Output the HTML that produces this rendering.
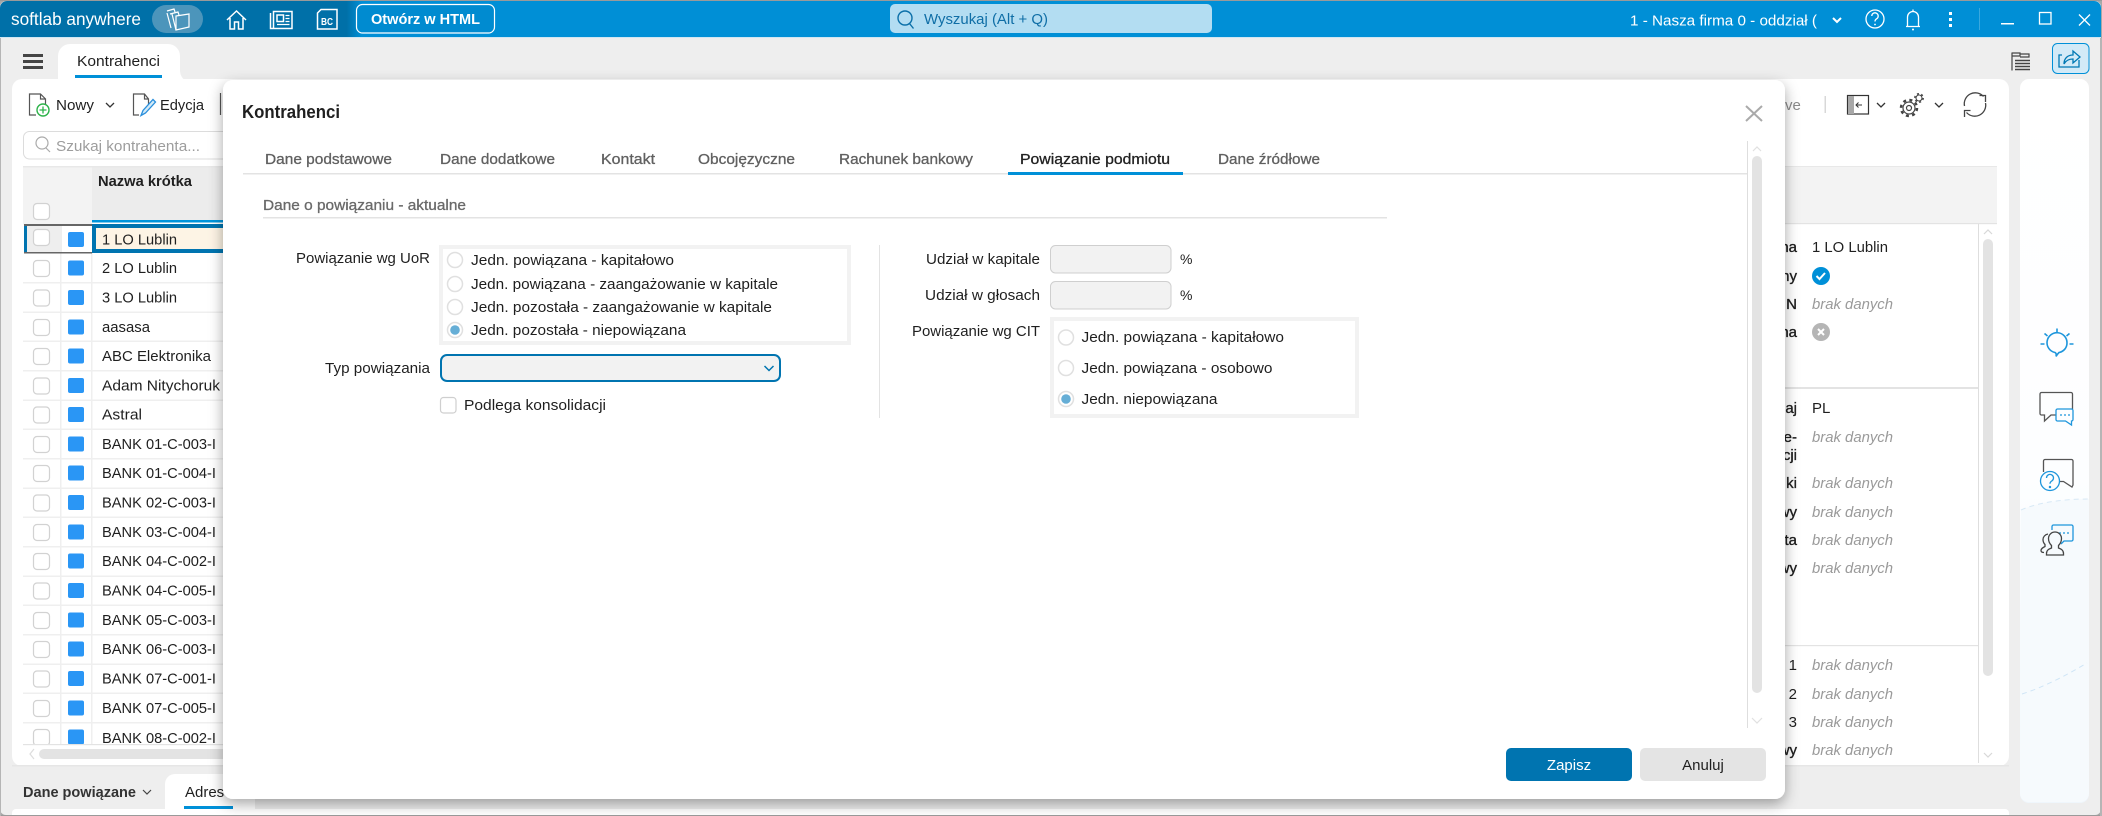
<!DOCTYPE html>
<html lang="pl"><head><meta charset="utf-8"><title>Kontrahenci</title>
<style>
html,body{margin:0;padding:0;width:2102px;height:816px;overflow:hidden;background:#a8a8a8}
svg{display:block}
text{font-family:"Liberation Sans",Arial,sans-serif;font-size:15px;fill:#1f1f1f}
.b{font-weight:bold}
.m{stroke:#1f1f1f;stroke-width:.35px}
.tab{fill:#606060;stroke:#606060;stroke-width:.3px;font-size:14.5px}
.g{font-style:italic;fill:#9a9a9a}
.w{fill:#fff}
</style></head><body>
<svg xmlns="http://www.w3.org/2000/svg" width="2102" height="816" viewBox="0 0 2102 816">
<defs>
<linearGradient id="tg" x1="0" x2="1" y1="0" y2="0"><stop offset="0" stop-color="#0070a8"/><stop offset=".165" stop-color="#0070a8"/><stop offset=".172" stop-color="#008fd6"/><stop offset="1" stop-color="#008fd6"/></linearGradient>
<linearGradient id="sb" x1="0" x2="0" y1="0" y2="1"><stop offset="0" stop-color="#fff"/><stop offset=".55" stop-color="#fdfeff"/><stop offset="1" stop-color="#eff6fc"/></linearGradient>
<filter id="sh" x="-5%" y="-5%" width="110%" height="115%"><feDropShadow dx="0" dy="5" stdDeviation="7" flood-color="#000" flood-opacity=".35"/></filter>
<clipPath id="tc"><rect x="23" y="166" width="205" height="578"/></clipPath>
<g id="cb"><rect x="0.5" y="0.5" width="16" height="16" rx="3.5" fill="#fff" stroke="#d2d2d2" stroke-width="1.2"/></g>
<g id="sq"><rect x="0" y="0" width="16" height="15" rx="2" fill="#2a96f5"/></g>
</defs>

<!-- window -->
<rect x="0" y="1" width="2101" height="814" rx="6" fill="#eeeeee"/>
<path d="M0 37V8a7 7 0 0 1 7-7H2094a7 7 0 0 1 7 7V37Z" fill="url(#tg)"/>
<rect x="0" y="37" width="2101" height="1" fill="#cfe6f3"/>

<!-- top bar left -->
<text class="w" x="11" y="25" style="font-size:17.5px" textLength="130" lengthAdjust="spacingAndGlyphs">softlab anywhere</text>
<rect x="152" y="5" width="51" height="28" rx="14" fill="#4c95bb"/>
<g fill="none" stroke="#fff" stroke-width="1.2">
<path d="M167 11l7-2 1 3M170 14l8-2 1 3"/><path d="M176 30l-4-16M171 28l-4-15"/>
<path d="M176 16l13-2v13l-13 3Z"/>
</g>
<g fill="none" stroke="#fff" stroke-width="1.5">
<path d="M227 20l9.5-9 9.5 9M230 18v11h4.5v-7h4v7h4.5V18"/>
<path d="M270.5 13v15.5h21.5V11.5H273.5v17"/>
<rect x="277" y="15" width="6.5" height="6.5"/>
<path d="M285.5 15.5h4M285.5 18.5h4M285.5 21.5h4M277 24.5h12.5" stroke-width="1.2"/>
<path d="M321 9.5h16v19.5h-19.5V13Z"/>
</g>
<text class="w b" x="321" y="25" style="font-size:10.5px" textLength="12" lengthAdjust="spacingAndGlyphs">BC</text>
<rect x="356.5" y="4.5" width="138" height="28.5" rx="6" fill="#008bd0" stroke="#fff" stroke-width="1.2"/>
<text class="w b" x="371" y="24" style="font-size:14.5px" textLength="109" lengthAdjust="spacingAndGlyphs">Otwórz w HTML</text>

<!-- search -->
<rect x="890" y="4" width="322" height="29" rx="5" fill="#b3ddf2"/>
<circle cx="905" cy="18" r="7" fill="none" stroke="#0a6fa8" stroke-width="1.4"/><path d="M909.5 23.5l4 5" stroke="#0a6fa8" stroke-width="1.4"/>
<text x="924" y="24" style="font-size:15px;fill:#0f6ea6" textLength="124" lengthAdjust="spacingAndGlyphs">Wyszukaj (Alt + Q)</text>

<!-- top right -->
<text class="w" x="1630" y="25.5" textLength="187" lengthAdjust="spacingAndGlyphs">1 - Nasza firma 0 - oddział (</text>
<path d="M1833 18l4 4 4-4" fill="none" stroke="#fff" stroke-width="2"/>
<g fill="none" stroke="#fff" stroke-width="1.3">
<circle cx="1875" cy="19" r="9"/>
<path d="M1871.8 16a3.2 3.2 0 1 1 4.8 2.8c-1.2.7-1.6 1.3-1.6 2.7"/>
<path d="M1906 26.500h14M1907.500 26v-9a5.500 5.500 0 0 1 11 0v9M1913 9.500v2"/>
</g>
<circle cx="1875" cy="24.500" r=".9" fill="#fff"/><circle cx="1913" cy="29.500" r="1" fill="#fff"/>
<g fill="#fff"><rect x="1949" y="12" width="3" height="3"/><rect x="1949" y="18" width="3" height="3"/><rect x="1949" y="24" width="3" height="3"/></g>
<rect x="1979" y="8" width="1" height="22" fill="#3aa8de"/>
<rect x="2001" y="23" width="13" height="1.500" fill="#fff"/>
<rect x="2039.500" y="12.500" width="11.500" height="11.500" fill="none" stroke="#fff" stroke-width="1.300"/>
<path d="M2079 14.500l11 11M2090 14.500l-11 11" stroke="#fff" stroke-width="1.300"/>

<!-- second bar -->
<g fill="#444"><rect x="23" y="54" width="20" height="3"/><rect x="23" y="60" width="20" height="3"/><rect x="23" y="66" width="20" height="3"/></g>
<path d="M58 80c0-1 0-3 0-24a12 12 0 0 1 12-12h98a12 12 0 0 1 12 12v14c0 6 3 9 5 10Z" fill="#fff"/>
<text x="77" y="66" textLength="83" lengthAdjust="spacingAndGlyphs">Kontrahenci</text>
<rect x="75" y="75" width="87" height="3" fill="#0090d8"/>
<g fill="none" stroke="#444" stroke-width="1.200">
<path d="M2012 52.500v18M2012 53h8v3h-8M2020 54h9v3h-9"/>
<path d="M2015 60.500h15M2015 63.500h15M2015 66.500h15M2015 69.500h15" stroke-width="1.500"/>
</g>
<rect x="2052.500" y="43.500" width="36.500" height="30" rx="5" fill="#d3eaf7" stroke="#0090d8" stroke-width="1"/>
<g fill="none" stroke="#0078b4" stroke-width="1.300">
<path d="M2062 55h-3v12h20v-7"/><path d="M2064 64c0-6 4-9 9-9v-4l7 6-7 6v-4c-4 0-7 1-9 5Z"/>
</g>

<!-- main white panel -->
<rect x="12" y="79" width="1997" height="687" rx="10" fill="#fff"/>
<rect x="12" y="765" width="1997" height="1.500" fill="#e6e6e6"/>
<!-- toolbar -->
<g fill="none" stroke="#555" stroke-width="1.200">
<path d="M36 115h-6.500V94h11l5 5v5M40.500 94v5h5"/>
<path d="M139 115h-5.500V94h11l4 5v6M144.500 94v5h4"/>
<path d="M220.500 93v22"/>
</g>
<circle cx="43" cy="110" r="6" fill="#fff" stroke="#2db34a" stroke-width="1.400"/><path d="M43 106.500v7M39.500 110h7" stroke="#2db34a" stroke-width="1.300"/>
<path d="M141 115.500l2-5 10-11 2.500 2.500-10 11Z" fill="#d3eaf7" stroke="#2a8fdc" stroke-width="1.300"/>
<text x="56" y="110" textLength="38" lengthAdjust="spacingAndGlyphs">Nowy</text>
<path d="M106 103l4 4 4-4" fill="none" stroke="#333" stroke-width="1.300"/>
<text x="160" y="110" textLength="44" lengthAdjust="spacingAndGlyphs">Edycja</text>
<!-- search -->
<rect x="23.500" y="131.500" width="210" height="27.500" rx="6" fill="#fff" stroke="#dcdcdc"/>
<circle cx="42" cy="143" r="6" fill="none" stroke="#aaa" stroke-width="1.200"/><path d="M46 148l4 4" stroke="#aaa" stroke-width="1.200"/>
<text x="56" y="151" style="font-size:15px;fill:#9d9d9d" textLength="144" lengthAdjust="spacingAndGlyphs">Szukaj kontrahenta...</text>
<!-- table header -->
<rect x="23" y="166" width="205" height="1.500" fill="#e8e8e8"/>
<rect x="23" y="167.500" width="69" height="57" fill="#f3f3f3"/>
<rect x="92" y="167.500" width="136" height="53" fill="#ececec"/>
<rect x="92" y="220" width="136" height="2.500" fill="#0095db"/>
<text class="b" x="98" y="186" style="font-size:14.500px" textLength="94" lengthAdjust="spacingAndGlyphs">Nazwa krótka</text>
<use href="#cb" x="33" y="203"/>

<!-- table rows -->
<g clip-path="url(#tc)">
<g fill="#efefef">
<rect x="60" y="253" width="1.500" height="491"/><rect x="91" y="253" width="1.500" height="491"/>
<rect x="23" y="282" width="205" height="1.500"/><rect x="23" y="311.500" width="205" height="1.500"/><rect x="23" y="340.500" width="205" height="1.500"/><rect x="23" y="370" width="205" height="1.500"/><rect x="23" y="399.500" width="205" height="1.500"/><rect x="23" y="428.500" width="205" height="1.500"/><rect x="23" y="458" width="205" height="1.500"/><rect x="23" y="487.500" width="205" height="1.500"/><rect x="23" y="516.500" width="205" height="1.500"/><rect x="23" y="546" width="205" height="1.500"/><rect x="23" y="575.500" width="205" height="1.500"/><rect x="23" y="604.500" width="205" height="1.500"/><rect x="23" y="634" width="205" height="1.500"/><rect x="23" y="663.500" width="205" height="1.500"/><rect x="23" y="692.500" width="205" height="1.500"/><rect x="23" y="722" width="205" height="1.500"/>
</g>
<!-- selected -->
<rect x="27" y="226" width="35" height="26" fill="#eeeeee"/>
<rect x="24" y="224" width="68" height="2" fill="#666"/><rect x="24" y="252" width="68" height="1.500" fill="#666"/>
<rect x="24" y="226" width="3" height="26" fill="#0074b0"/>
<rect x="92" y="224" width="136" height="29" fill="#0074b0"/>
<rect x="96" y="228" width="132" height="21" fill="#fdf4e5"/>
<use href="#cb" x="33" y="229"/><use href="#sq" x="68" y="232"/>
<text x="102" y="244.500" textLength="75" lengthAdjust="spacingAndGlyphs">1 LO Lublin</text>
<use href="#cb" x="33" y="260"/><use href="#sq" x="68" y="260.500"/><text x="102" y="273" textLength="75" lengthAdjust="spacingAndGlyphs">2 LO Lublin</text>
<use href="#cb" x="33" y="289.500"/><use href="#sq" x="68" y="290"/><text x="102" y="302.500" textLength="75" lengthAdjust="spacingAndGlyphs">3 LO Lublin</text>
<use href="#cb" x="33" y="319"/><use href="#sq" x="68" y="319.500"/><text x="102" y="332" textLength="48" lengthAdjust="spacingAndGlyphs">aasasa</text>
<use href="#cb" x="33" y="348"/><use href="#sq" x="68" y="348.500"/><text x="102" y="361" textLength="109" lengthAdjust="spacingAndGlyphs">ABC Elektronika</text>
<use href="#cb" x="33" y="377.500"/><use href="#sq" x="68" y="378"/><text x="102" y="390.500" textLength="118" lengthAdjust="spacingAndGlyphs">Adam Nitychoruk</text>
<use href="#cb" x="33" y="406.500"/><use href="#sq" x="68" y="407"/><text x="102" y="419.500" textLength="40" lengthAdjust="spacingAndGlyphs">Astral</text>
<use href="#cb" x="33" y="436"/><use href="#sq" x="68" y="436.500"/><text x="102" y="449" textLength="114" lengthAdjust="spacingAndGlyphs">BANK 01-C-003-I</text>
<use href="#cb" x="33" y="465"/><use href="#sq" x="68" y="465.500"/><text x="102" y="478" textLength="114" lengthAdjust="spacingAndGlyphs">BANK 01-C-004-I</text>
<use href="#cb" x="33" y="494.500"/><use href="#sq" x="68" y="495"/><text x="102" y="507.500" textLength="114" lengthAdjust="spacingAndGlyphs">BANK 02-C-003-I</text>
<use href="#cb" x="33" y="524"/><use href="#sq" x="68" y="524.500"/><text x="102" y="537" textLength="114" lengthAdjust="spacingAndGlyphs">BANK 03-C-004-I</text>
<use href="#cb" x="33" y="553"/><use href="#sq" x="68" y="553.500"/><text x="102" y="566" textLength="114" lengthAdjust="spacingAndGlyphs">BANK 04-C-002-I</text>
<use href="#cb" x="33" y="582.500"/><use href="#sq" x="68" y="583"/><text x="102" y="595.500" textLength="114" lengthAdjust="spacingAndGlyphs">BANK 04-C-005-I</text>
<use href="#cb" x="33" y="612"/><use href="#sq" x="68" y="612.500"/><text x="102" y="625" textLength="114" lengthAdjust="spacingAndGlyphs">BANK 05-C-003-I</text>
<use href="#cb" x="33" y="641"/><use href="#sq" x="68" y="641.500"/><text x="102" y="654" textLength="114" lengthAdjust="spacingAndGlyphs">BANK 06-C-003-I</text>
<use href="#cb" x="33" y="670.500"/><use href="#sq" x="68" y="671"/><text x="102" y="683.500" textLength="114" lengthAdjust="spacingAndGlyphs">BANK 07-C-001-I</text>
<use href="#cb" x="33" y="700"/><use href="#sq" x="68" y="700.500"/><text x="102" y="713" textLength="114" lengthAdjust="spacingAndGlyphs">BANK 07-C-005-I</text>
<use href="#cb" x="33" y="729"/><use href="#sq" x="68" y="729.500"/><text x="102" y="743" textLength="114" lengthAdjust="spacingAndGlyphs">BANK 08-C-002-I</text>
</g>
<rect x="23" y="744" width="205" height="1.200" fill="#e3e3e3"/>
<path d="M34 749l-4 5 4 5" fill="none" stroke="#ddd" stroke-width="1.200"/>
<rect x="39" y="749" width="190" height="10" rx="5" fill="#e3e3e3"/>

<!-- right behind part -->
<text x="1785" y="110" style="font-size:15px;fill:#8a8a8a">ve</text>
<rect x="1824.500" y="96" width="1.500" height="17" fill="#d8d8d8"/>
<rect x="1847.500" y="95.500" width="21" height="18.500" fill="#fff" stroke="#333" stroke-width="1.200"/>
<rect x="1848" y="96" width="6" height="18" fill="#a8a8a8"/>
<path d="M1862 105h-6M1858.500 102.500l-2.500 2.500 2.500 2.500" fill="none" stroke="#333" stroke-width="1"/>
<path d="M1877 103l4 4 4-4M1935 103l4 4 4-4" fill="none" stroke="#333" stroke-width="1.300"/>
<g fill="none" stroke="#444">
<circle cx="1909" cy="108" r="6" stroke-width="1.200"/><circle cx="1909" cy="108" r="8" stroke-width="2.500" stroke-dasharray="3 3.300"/><circle cx="1909" cy="108" r="2.500" stroke-width="1.200"/>
<circle cx="1919" cy="98" r="3" stroke-width="1.100"/><circle cx="1919" cy="98" r="4.200" stroke-width="1.500" stroke-dasharray="2 2.400"/>
<path d="M1964.500 106a11 11 0 0 1 19-9.500M1985.500 102v-6.500h-6M1985.500 103a11 11 0 0 1-19 9.500M1964.500 117v-6.500h6" stroke-width="1.300"/>
</g>
<rect x="1785" y="166" width="212" height="1.200" fill="#e8e8e8"/>
<rect x="1785" y="167" width="212" height="56" fill="#f3f3f3"/>
<rect x="1785" y="223" width="212" height="1.200" fill="#e3e3e3"/>
<rect x="1978" y="224" width="1" height="539" fill="#dedede"/>
<path d="M1984 234l4-4 4 4M1984 753l4 4 4-4" fill="none" stroke="#d8d8d8" stroke-width="1.200"/>
<rect x="1983" y="239" width="10" height="437" rx="5" fill="#e3e3e3"/>
<g text-anchor="end">
<text class="m" x="1797" y="252">na</text>
<text class="m" x="1797" y="281">ny</text>
<text class="m" x="1797" y="309">N</text>
<text class="m" x="1797" y="337">na</text>
<text class="m" x="1797" y="413">aj</text>
<text class="m" x="1797" y="442">e-</text>
<text class="m" x="1797" y="460">cji</text>
<text class="m" x="1797" y="488">ki</text>
<text class="m" x="1797" y="517">wy</text>
<text class="m" x="1797" y="545">ta</text>
<text class="m" x="1797" y="573">wy</text>
<text x="1797" y="670">1</text>
<text x="1797" y="699">2</text>
<text x="1797" y="727">3</text>
<text class="m" x="1797" y="755">wy</text>
</g>
<text x="1812" y="252" textLength="76" lengthAdjust="spacingAndGlyphs">1 LO Lublin</text>
<circle cx="1821" cy="276" r="9" fill="#0090d8"/><path d="M1816.500 276l3 3 5.500-6" fill="none" stroke="#fff" stroke-width="2"/>
<circle cx="1821" cy="332" r="9" fill="#b5b5b5"/><path d="M1818 329l6 6M1824 329l-6 6" fill="none" stroke="#fff" stroke-width="2"/>
<text x="1812" y="413">PL</text>
<text class="g" x="1812" y="309" textLength="81" lengthAdjust="spacingAndGlyphs">brak danych</text>
<text class="g" x="1812" y="442" textLength="81" lengthAdjust="spacingAndGlyphs">brak danych</text>
<text class="g" x="1812" y="488" textLength="81" lengthAdjust="spacingAndGlyphs">brak danych</text>
<text class="g" x="1812" y="517" textLength="81" lengthAdjust="spacingAndGlyphs">brak danych</text>
<text class="g" x="1812" y="545" textLength="81" lengthAdjust="spacingAndGlyphs">brak danych</text>
<text class="g" x="1812" y="573" textLength="81" lengthAdjust="spacingAndGlyphs">brak danych</text>
<text class="g" x="1812" y="670" textLength="81" lengthAdjust="spacingAndGlyphs">brak danych</text>
<text class="g" x="1812" y="699" textLength="81" lengthAdjust="spacingAndGlyphs">brak danych</text>
<text class="g" x="1812" y="727" textLength="81" lengthAdjust="spacingAndGlyphs">brak danych</text>
<text class="g" x="1812" y="755" textLength="81" lengthAdjust="spacingAndGlyphs">brak danych</text>
<rect x="1785" y="387" width="193" height="2" fill="#e3e3e3"/>
<rect x="1785" y="645" width="193" height="1.200" fill="#e3e3e3"/>

<!-- right side panel -->
<rect x="2020" y="79" width="69" height="724" rx="9" fill="url(#sb)"/>
<path d="M2021 510c18-8 44-11 68-11v294a9 9 0 0 1-9 9h-51a9 9 0 0 1-9-9Z" fill="#f6fafd"/>
<path d="M2021 510c18-8 44-11 68-11" fill="none" stroke="#d8e9f6" stroke-dasharray="5 4"/>
<path d="M2022 694c22-7 45-19 65-31" fill="none" stroke="#cfe5f6" stroke-dasharray="5 4"/>
<g fill="none" stroke="#1e96dc" stroke-width="1.600">
<path d="M2056 356.500c1-2 2-3 3-4 5-1 8-5 8-9.500a10 10 0 1 0-12 9.500c1 .5 1.500 2 1 4"/>
<path d="M2057 328.500v4M2044.500 333.500l3 2.500M2069.500 333.500l-3 2.500M2040.500 344h4M2069.500 344h4"/>
</g>
<g fill="none" stroke="#555" stroke-width="1.300">
<path d="M2056 415h-5l-6.500 6v-6h-3a1.500 1.500 0 0 1-1.500-1.500V394a1.500 1.500 0 0 1 1.500-1.500h29.500a1.500 1.500 0 0 1 1.500 1.500v15"/>
<path d="M2043.500 472v-11a1.500 1.500 0 0 1 1.500-1.500h26.500a1.500 1.500 0 0 1 1.500 1.500v24l-1 2-8.500-5.500h-3.500"/>
</g>
<g fill="none" stroke="#1e96dc" stroke-width="1.300">
<path d="M2058 409h13.500a1.500 1.500 0 0 1 1.500 1.500v9a1.500 1.500 0 0 1-1.500 1.500v4l-6-4h-8a1.500 1.500 0 0 1-1.500-1.500v-9a1.500 1.500 0 0 1 1.500-1.500Z"/>
<path d="M2060 415h10" stroke-dasharray="2 2"/>
<circle cx="2050" cy="481" r="9.500"/><path d="M2046.500 478a3.500 3.500 0 1 1 5.500 2.800c-1.300.8-2 1.500-2 3"/><circle cx="2050" cy="487" r=".6"/>
<path d="M2052 530v-3.500a1.500 1.500 0 0 1 1.500-1.500h18a1.500 1.500 0 0 1 1.500 1.500v13a1.500 1.500 0 0 1-1.500 1.500h-7.500l-3 3"/>
<path d="M2059 533h10" stroke-dasharray="2 2"/>
</g>
<g fill="none" stroke="#444" stroke-width="1.300">
<path d="M2055 532a6.500 6.500 0 0 1 6.500 6.500c0 3-1.500 5.500-3 7v2.500c2.500 1 5 2 5 5.500v1.500h-17v-1.500c0-3.500 2.500-4.500 5-5.500v-2.500c-1.500-1.500-3-4-3-7a6.500 6.500 0 0 1 6.500-6.500Z"/>
<path d="M2048 534c-3 .5-5 3-5 5.500 0 2 1 4 2 5v2c-2 1-4 2-4 4 0 1.500 1 2 3 2"/>
</g>

<!-- bottom tabs -->
<text class="b" x="23" y="797" style="font-size:15px;fill:#333" textLength="113" lengthAdjust="spacingAndGlyphs">Dane powiązane</text>
<path d="M143 790l4 4 4-4" fill="none" stroke="#444" stroke-width="1.200"/>
<path d="M165 809v-25a10 10 0 0 1 10-10h80v35Z" fill="#fff"/>
<text x="185" y="797" style="font-size:15px">Adres</text>
<rect x="184" y="806" width="49" height="3" fill="#0090d8"/>
<path d="M12 816v-3a4 4 0 0 1 4-4H2005a4 4 0 0 1 4 4v3Z" fill="#fff"/>
<rect x="0" y="815" width="2102" height="1" fill="#9a9a9a"/>
<rect x="0" y="0" width="2102" height="1" fill="#9a9a9a"/>
<rect x="0" y="38" width="1" height="778" fill="#b5b5b5"/>
<rect x="2100" y="38" width="2" height="778" fill="#b5b5b5"/>

<!-- dialog -->
<rect x="223" y="80" width="1562" height="719" rx="10" fill="#fff" filter="url(#sh)"/>
<text class="b" x="242" y="118" style="font-size:18px" textLength="98" lengthAdjust="spacingAndGlyphs">Kontrahenci</text>
<path d="M1746 106l16 15M1762 106l-16 15" stroke="#aaa" stroke-width="2"/>
<rect x="243" y="173" width="1504" height="1.500" fill="#e3e3e3"/>
<text class="tab" x="265" y="164" textLength="127" lengthAdjust="spacingAndGlyphs">Dane podstawowe</text>
<text class="tab" x="440" y="164" textLength="115" lengthAdjust="spacingAndGlyphs">Dane dodatkowe</text>
<text class="tab" x="601" y="164" textLength="54" lengthAdjust="spacingAndGlyphs">Kontakt</text>
<text class="tab" x="698" y="164" textLength="97" lengthAdjust="spacingAndGlyphs">Obcojęzyczne</text>
<text class="tab" x="839" y="164" textLength="134" lengthAdjust="spacingAndGlyphs">Rachunek bankowy</text>
<text class="tab" x="1020" y="164" style="fill:#222;stroke:#222" textLength="150" lengthAdjust="spacingAndGlyphs">Powiązanie podmiotu</text>
<text class="tab" x="1218" y="164" textLength="102" lengthAdjust="spacingAndGlyphs">Dane źródłowe</text>
<rect x="1008" y="172" width="175" height="3" fill="#0090d8"/>
<rect x="1747" y="141" width="1" height="587" fill="#dedede"/>
<path d="M1753 151l4-4 4 4M1752 718l5 5 5-5" fill="none" stroke="#e0e0e0" stroke-width="1.200"/>
<rect x="1752" y="156" width="10" height="537" rx="5" fill="#e3e3e3"/>

<text x="263" y="210" style="font-size:14.500px;fill:#6a6a6a;stroke:#6a6a6a;stroke-width:.3px" textLength="203" lengthAdjust="spacingAndGlyphs">Dane o powiązaniu - aktualne</text>
<rect x="263" y="217" width="1124" height="1.500" fill="#e3e3e3"/>

<text x="296" y="263" textLength="134" lengthAdjust="spacingAndGlyphs">Powiązanie wg UoR</text>
<rect x="441" y="247" width="408" height="96" fill="#fff" stroke="#f2f2f2" stroke-width="4"/>
<g fill="#fff" stroke="#e0e0e0" stroke-width="1.500">
<circle cx="455" cy="260" r="7.500"/><circle cx="455" cy="284" r="7.500"/><circle cx="455" cy="307" r="7.500"/><circle cx="455" cy="330" r="7.500"/>
</g>
<circle cx="455" cy="330" r="4.800" fill="#66aed6"/>
<text x="471" y="265" textLength="203" lengthAdjust="spacingAndGlyphs">Jedn. powiązana - kapitałowo</text>
<text x="471" y="289" textLength="307" lengthAdjust="spacingAndGlyphs">Jedn. powiązana - zaangażowanie w kapitale</text>
<text x="471" y="312" textLength="301" lengthAdjust="spacingAndGlyphs">Jedn. pozostała - zaangażowanie w kapitale</text>
<text x="471" y="335" textLength="215" lengthAdjust="spacingAndGlyphs">Jedn. pozostała - niepowiązana</text>

<text x="325" y="373" textLength="105" lengthAdjust="spacingAndGlyphs">Typ powiązania</text>
<rect x="441" y="355" width="339" height="26" rx="6" fill="#f2f2f2" stroke="#0074b0" stroke-width="2"/>
<path d="M764.500 366l4.500 4.500 4.500-4.500" fill="none" stroke="#0074b0" stroke-width="1.500"/>
<rect x="440.500" y="397.500" width="15.500" height="15.500" rx="3" fill="#fff" stroke="#cfcfcf" stroke-width="1.200"/>
<text x="464" y="410" textLength="142" lengthAdjust="spacingAndGlyphs">Podlega konsolidacji</text>

<rect x="879" y="245" width="1" height="173" fill="#e3e3e3"/>

<text x="926" y="264" textLength="114" lengthAdjust="spacingAndGlyphs">Udział w kapitale</text>
<rect x="1050.500" y="245.500" width="120.500" height="27.500" rx="5" fill="#f2f2f2" stroke="#cfcfcf"/>
<text x="1180" y="264" style="font-size:14px">%</text>
<text x="925" y="300" textLength="115" lengthAdjust="spacingAndGlyphs">Udział w głosach</text>
<rect x="1050.500" y="281.500" width="120.500" height="27.500" rx="5" fill="#f2f2f2" stroke="#cfcfcf"/>
<text x="1180" y="300" style="font-size:14px">%</text>
<text x="912" y="336" textLength="128" lengthAdjust="spacingAndGlyphs">Powiązanie wg CIT</text>
<rect x="1052" y="319" width="305" height="97" fill="#fff" stroke="#f2f2f2" stroke-width="4"/>
<g fill="#fff" stroke="#e0e0e0" stroke-width="1.500">
<circle cx="1066" cy="337.500" r="7.500"/><circle cx="1066" cy="368" r="7.500"/><circle cx="1066" cy="399" r="7.500"/>
</g>
<circle cx="1066" cy="399" r="4.800" fill="#66aed6"/>
<text x="1081.500" y="342" textLength="202.500" lengthAdjust="spacingAndGlyphs">Jedn. powiązana - kapitałowo</text>
<text x="1081.500" y="373" textLength="191" lengthAdjust="spacingAndGlyphs">Jedn. powiązana - osobowo</text>
<text x="1081.500" y="404" textLength="136" lengthAdjust="spacingAndGlyphs">Jedn. niepowiązana</text>

<rect x="1506" y="748" width="126" height="33" rx="5" fill="#0074b0"/>
<text class="w" x="1569" y="770" text-anchor="middle" style="font-size:15px">Zapisz</text>
<rect x="1640" y="748" width="126" height="33" rx="5" fill="#e4e4e4"/>
<text x="1703" y="770" text-anchor="middle" style="font-size:15px">Anuluj</text>
</svg>
</body></html>
